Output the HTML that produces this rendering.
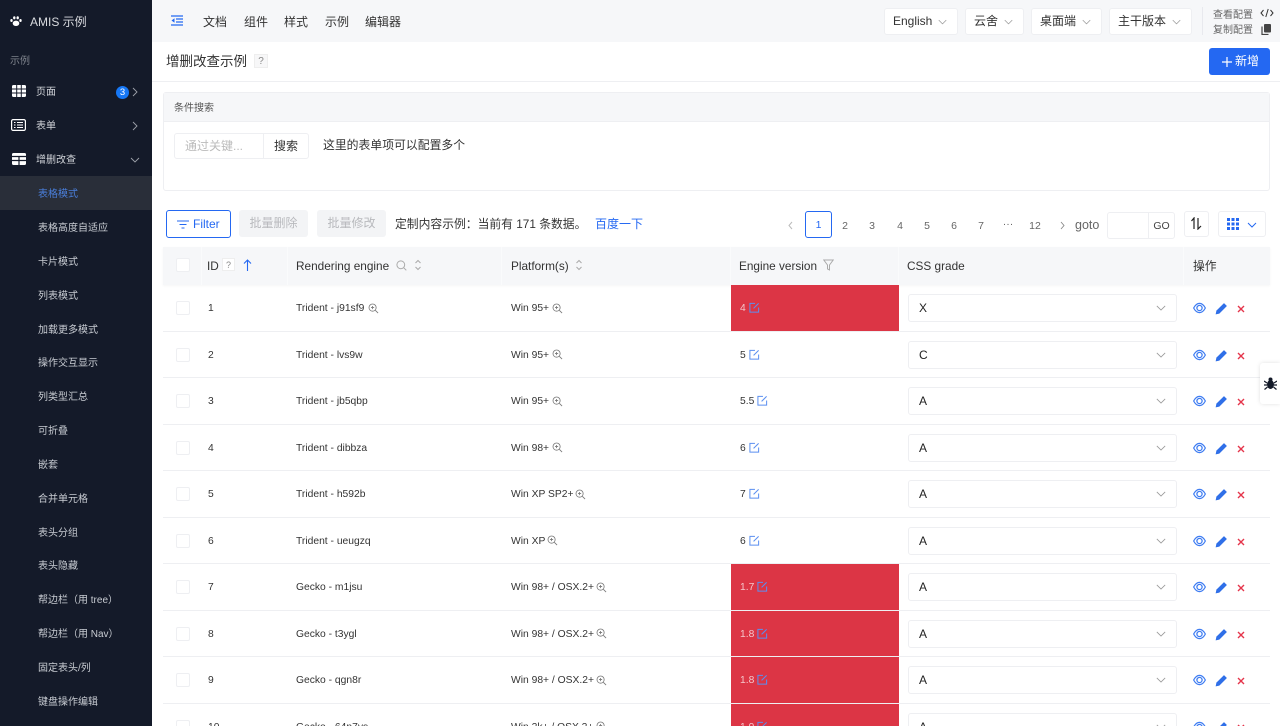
<!DOCTYPE html>
<html><head><meta charset="utf-8"><style>
*{box-sizing:border-box}
html,body{margin:0;padding:0;width:1280px;height:726px;overflow:hidden;background:#fff;font-family:"Liberation Sans","Noto Sans CJK SC",sans-serif;color:#222}
#root{position:absolute;left:0;top:0;width:1280px;height:726px;overflow:hidden;background:#fff}
.a{position:absolute;white-space:nowrap}
#side{position:absolute;left:0;top:0;width:152px;height:726px;background:#141a29;overflow:hidden}
.m{position:absolute;left:38px;margin-top:1px;font-size:10px;line-height:14px;color:#c8ccd2;white-space:nowrap}
.h{position:absolute;left:36px;margin-top:1px;font-size:10px;line-height:14px;color:#d0d3d8}
.nav{position:absolute;top:14px;font-size:12px;line-height:16px;color:#333}
.sel{position:absolute;top:8px;height:27px;background:#fff;border:1px solid #eeeff2;border-radius:3px;font-size:12px;line-height:25px;padding-left:8px;color:#333}
.sel svg{position:absolute;top:10px;right:10px}
.bd{position:absolute;border:1px solid #eeeff2;border-radius:3px;background:#fff}
.pg{position:absolute;top:219px;font-size:10.5px;line-height:14px;color:#666;width:24px;text-align:center}
.th{position:absolute;top:247px;height:38px;background:#f6f7f9;font-size:11.8px;line-height:38px;color:#333}
.row{position:absolute;left:163px;width:1107px;height:46.5px;border-bottom:1px solid #eeeff2}
.row>span{position:absolute;top:1px;font-size:10.3px;line-height:46px;color:#333;white-space:nowrap}
.row svg{position:absolute}
.cb{position:absolute;left:13px;top:16px;width:14px;height:14px;border:1px solid #eeeff2;border-radius:2px;background:#fff}
.red{position:absolute;left:568px;top:0;width:168px;height:45.5px;background:#dc3545}
.s2{position:absolute;left:745px;top:9px;width:269px;height:28px;border:1px solid #eeeff2;border-radius:3px;background:#fff;font-size:12px;line-height:26px;padding-left:10px;color:#222}
</style></head><body>
<svg width="0" height="0" style="position:absolute"><defs>
<symbol id="mg" viewBox="0 0 12 12"><circle cx="5" cy="5" r="3.9" fill="none" stroke="#777" stroke-width=".9"/><path d="M8 8l3 3M3.3 5h3.4M5 3.3v3.4" stroke="#777" stroke-width=".9" fill="none"/></symbol>
<symbol id="ed" viewBox="0 0 12 12"><path d="M6.5 1.5H1v9.5h9.5V6" fill="none" stroke="#5b8ff0" stroke-width="1.1"/><path d="M5 7l5.5-5.5" stroke="#5b8ff0" stroke-width="1.1"/></symbol>
<symbol id="eye" viewBox="0 0 14 12"><path d="M.7 6C2.500 2.600 4.600 1 7 1S11.500 2.600 13.300 6C11.500 9.400 9.400 11 7 11S2.500 9.400.7 6z" fill="none" stroke="#3f7df2" stroke-width="1.300"/><circle cx="7" cy="6" r="2.800" fill="none" stroke="#3f7df2" stroke-width="1.400"/></symbol>
<symbol id="pen" viewBox="0 0 12 12"><path d="M.6 11.400l.7-3.400L8.300 1l2.700 2.700L4 10.700z" fill="#2f6fe8"/></symbol>
<symbol id="x" viewBox="0 0 8 8"><path d="M1 1l6 6M7 1L1 7" stroke="#e5354b" stroke-width="1.400"/></symbol>
<symbol id="dn" viewBox="0 0 12 7"><path d="M1 1l5 5 5-5" fill="none" stroke="#999" stroke-width="1"/></symbol>
<symbol id="sort" viewBox="0 0 8 12"><path d="M1.500 4L4 1.500 6.500 4M1.500 8L4 10.500 6.500 8" fill="none" stroke="#aaa" stroke-width="1"/></symbol>
</defs></svg>
<div id="root">
<div id="side">
<svg class="a" style="left:10px;top:15px" width="12" height="12" viewBox="0 0 12 12"><g fill="#fff"><ellipse cx="6" cy="8.300" rx="3.300" ry="2.700"/><ellipse cx="1.500" cy="5.500" rx="1.200" ry="1.500"/><ellipse cx="4.300" cy="2.800" rx="1.200" ry="1.600"/><ellipse cx="7.700" cy="2.800" rx="1.200" ry="1.600"/><ellipse cx="10.500" cy="5.500" rx="1.200" ry="1.500"/></g></svg>
<div class="a" style="left:30px;top:14px;font-size:12px;line-height:16px;color:#d8dade">AMIS 示例</div>
<div class="a" style="left:10px;top:55px;font-size:10px;line-height:14px;color:#7e838c">示例</div>

<svg class="a" style="left:12px;top:85px" width="14" height="12" viewBox="0 0 14 12"><rect width="14" height="12" rx="1.500" fill="#fff"/><path d="M0 4h14M0 8h14M4.700 0v12M9.300 0v12" stroke="#141a29" stroke-width="1"/></svg>
<div class="h" style="top:85px">页面</div>
<div class="a" style="left:116px;top:86px;width:13px;height:13px;border-radius:50%;background:#1677f5;color:#fff;font-size:9.500px;line-height:13px;text-align:center">3</div>
<svg class="a" style="left:132px;top:87px" width="6" height="10" viewBox="0 0 6 10"><path d="M1 1l4 4-4 4" fill="none" stroke="#9da1a9" stroke-width=".9"/></svg>

<svg class="a" style="left:11px;top:119px" width="15" height="12" viewBox="0 0 15 12"><rect x=".6" y=".6" width="13.800" height="10.800" rx="1.500" fill="none" stroke="#fff" stroke-width="1.200"/><path d="M3 3.500h1.500M6 3.500h6M3 6h1.500M6 6h6M3 8.500h1.500M6 8.500h6" stroke="#fff" stroke-width="1.100"/></svg>
<div class="h" style="top:119px">表单</div>
<svg class="a" style="left:132px;top:121px" width="6" height="10" viewBox="0 0 6 10"><path d="M1 1l4 4-4 4" fill="none" stroke="#9da1a9" stroke-width=".9"/></svg>

<svg class="a" style="left:12px;top:153px" width="14" height="12" viewBox="0 0 14 12"><rect width="14" height="12" rx="1.500" fill="#fff"/><path d="M0 3.500h14M0 7.500h14M7 3.500v8.500" stroke="#141a29" stroke-width="1.200"/></svg>
<div class="h" style="top:153px">增删改查</div>
<svg class="a" style="left:130px;top:157px" width="10" height="6" viewBox="0 0 10 6"><path d="M1 1l4 4 4-4" fill="none" stroke="#9da1a9" stroke-width=".9"/></svg>

<div class="a" style="left:0;top:176px;width:152px;height:34px;background:#292e39"></div>
<div class="m" style="top:187px;color:#4a7fdc">表格模式</div>
<div class="m" style="top:221px">表格高度自适应</div>
<div class="m" style="top:255px">卡片模式</div>
<div class="m" style="top:289px">列表模式</div>
<div class="m" style="top:323px">加载更多模式</div>
<div class="m" style="top:356px">操作交互显示</div>
<div class="m" style="top:390px">列类型汇总</div>
<div class="m" style="top:424px">可折叠</div>
<div class="m" style="top:458px">嵌套</div>
<div class="m" style="top:492px">合并单元格</div>
<div class="m" style="top:526px">表头分组</div>
<div class="m" style="top:559px">表头隐藏</div>
<div class="m" style="top:593px">帮边栏（用 tree）</div>
<div class="m" style="top:627px">帮边栏（用 Nav）</div>
<div class="m" style="top:661px">固定表头/列</div>
<div class="m" style="top:695px">键盘操作编辑</div>
</div>

<!-- top bar -->
<div class="a" style="left:152px;top:0;width:1128px;height:42px;background:#f6f7f9"></div>
<svg class="a" style="left:171px;top:15px" width="12" height="11" viewBox="0 0 12 11"><path d="M0 1h12M5 4h7M5 7h7M0 10h12" stroke="#2468f2" stroke-width="1.200"/><path d="M3.500 3.200L.5 5.500l3 2.300z" fill="#2468f2"/></svg>
<div class="nav" style="left:203px">文档</div>
<div class="nav" style="left:244px">组件</div>
<div class="nav" style="left:284px">样式</div>
<div class="nav" style="left:325px">示例</div>
<div class="nav" style="left:365px">编辑器</div>
<div class="sel" style="left:884px;width:74px">English<svg width="9" height="6"><use href="#dn"/></svg></div>
<div class="sel" style="left:965px;width:59px">云舍<svg width="9" height="6"><use href="#dn"/></svg></div>
<div class="sel" style="left:1031px;width:71px">桌面端<svg width="9" height="6"><use href="#dn"/></svg></div>
<div class="sel" style="left:1109px;width:83px">主干版本<svg width="9" height="6"><use href="#dn"/></svg></div>
<div class="a" style="left:1202px;top:7px;width:1px;height:28px;background:#e8e9ee"></div>
<div class="a" style="left:1213px;top:9px;font-size:10px;line-height:14px;color:#666">查看配置</div>
<div class="a" style="left:1213px;top:24px;font-size:10px;line-height:14px;color:#666">复制配置</div>
<svg class="a" style="left:1260px;top:8px" width="14" height="10" viewBox="0 0 14 10"><path d="M3.500 2L1 5l2.500 3M10.500 2L13 5l-2.500 3M8.200 1L5.800 9" fill="none" stroke="#333" stroke-width="1"/></svg>
<svg class="a" style="left:1261px;top:24px" width="10" height="11" viewBox="0 0 10 11"><rect x="3" y="0" width="7" height="8.500" rx="1" fill="#444"/><path d="M1 2.500v8h6.500" fill="none" stroke="#444" stroke-width="1.200"/></svg>

<!-- title -->
<div class="a" style="left:166px;top:53px;font-size:13.500px;line-height:18px;color:#333">增删改查示例</div>
<div class="a" style="left:254px;top:54px;width:14px;height:14px;background:#f7f7f8;border:1px solid #eee;color:#888;font-size:10px;line-height:13px;text-align:center">?</div>
<div class="a" style="left:1209px;top:48px;width:61px;height:27px;background:#2468f2;border-radius:3px;color:#fff;font-size:12px;line-height:27px;padding-left:26px">新增</div>
<svg class="a" style="left:1222px;top:57px" width="10" height="10" viewBox="0 0 10 10"><path d="M5 0v10M0 5h10" stroke="#fff" stroke-width="1.200"/></svg>
<div class="a" style="left:152px;top:81px;width:1128px;height:1px;background:#eeeff2"></div>

<!-- filter panel -->
<div class="bd" style="left:163px;top:92px;width:1107px;height:99px;border-radius:3px"></div>
<div class="a" style="left:164px;top:93px;width:1105px;height:29px;background:#f6f7f9;border-bottom:1px solid #eeeff2;font-size:10px;line-height:29px;padding-left:10px;color:#555"><span style="position:relative;top:1px">条件搜索</span></div>
<div class="bd" style="left:174px;top:133px;width:90px;height:26px;border-radius:3px 0 0 3px;font-size:12px;line-height:24px;padding-left:10px;color:#bbb">通过关键...</div>
<div class="bd" style="left:263px;top:133px;width:46px;height:26px;border-radius:0 3px 3px 0;font-size:12px;line-height:25px;text-align:center;color:#333">搜索</div>
<div class="a" style="left:323px;top:137px;font-size:11.850px;line-height:16px;color:#333">这里的表单项可以配置多个</div>

<!-- toolbar -->
<div class="a" style="left:166px;top:210px;width:65px;height:28px;border:1px solid #2468f2;border-radius:3px;color:#2468f2;font-size:12px;line-height:26px;padding-left:26px;background:#fff">Filter</div>
<svg class="a" style="left:177px;top:220px" width="12" height="9" viewBox="0 0 12 9"><path d="M0 1h12M2.500 4.500h7M4.500 8h3" stroke="#2468f2" stroke-width="1.100"/></svg>
<div class="a" style="left:239px;top:210px;width:69px;height:27px;background:#f3f4f6;border-radius:3px;color:#b8b9bd;font-size:12px;line-height:27px;text-align:center">批量删除</div>
<div class="a" style="left:317px;top:210px;width:69px;height:27px;background:#f3f4f6;border-radius:3px;color:#b8b9bd;font-size:12px;line-height:27px;text-align:center">批量修改</div>
<div class="a" style="left:395px;top:216px;font-size:11.800px;line-height:16px;color:#333">定制内容示例：当前有 171 条数据。</div>
<div class="a" style="left:595px;top:216px;font-size:12px;line-height:16px;color:#2468f2">百度一下</div>

<!-- pagination -->
<svg class="a" style="left:788px;top:221px" width="5" height="9" viewBox="0 0 5 9"><path d="M4 1L1 4.500 4 8" fill="none" stroke="#bbb"/></svg>
<div class="a" style="left:805px;top:211px;width:27px;height:27px;border:1px solid #2468f2;border-radius:3px;text-align:center;color:#2468f2;font-size:10.500px;line-height:27px">1</div>
<div class="pg" style="left:833px">2</div><div class="pg" style="left:860px">3</div><div class="pg" style="left:888px">4</div><div class="pg" style="left:915px">5</div><div class="pg" style="left:942px">6</div><div class="pg" style="left:969px">7</div><div class="pg" style="left:996px;top:217px">···</div><div class="pg" style="left:1023px">12</div>
<svg class="a" style="left:1060px;top:221px" width="5" height="9" viewBox="0 0 5 9"><path d="M1 1l3 3.500L1 8" fill="none" stroke="#888" stroke-width=".9"/></svg>
<div class="a" style="left:1075px;top:217px;font-size:12.500px;line-height:16px;color:#666">goto</div>
<div class="bd" style="left:1107px;top:212px;width:42px;height:27px;border-radius:3px 0 0 3px"></div>
<div class="bd" style="left:1148px;top:212px;width:27px;height:27px;border-radius:0 3px 3px 0;font-size:10.500px;line-height:27px;text-align:center;color:#444">GO</div>
<div class="bd" style="left:1184px;top:211px;width:25px;height:26px"></div>
<svg class="a" style="left:1190px;top:217px" width="13" height="13" viewBox="0 0 13 13"><path d="M4 12V1L1.500 4M8 1v11l3-3" fill="none" stroke="#222" stroke-width="1.200"/></svg>
<div class="bd" style="left:1218px;top:211px;width:48px;height:26px"></div>
<svg class="a" style="left:1227px;top:218px" width="12" height="12" viewBox="0 0 12 12"><path fill="#2468f2" d="M0 0h3v3H0zM4.500 0h3v3h-3zM9 0h3v3H9zM0 4.500h3v3H0zM4.500 4.500h3v3h-3zM9 4.500h3v3H9zM0 9h3v3H0zM4.500 9h3v3h-3zM9 9h3v3H9z"/></svg>
<svg class="a" style="left:1247px;top:222px" width="10" height="6" viewBox="0 0 10 6"><path d="M1 1l4 4 4-4" fill="none" stroke="#2468f2"/></svg>

<!-- table header -->
<div class="a" style="left:163px;top:247px;width:1107px;height:38px;background:#fafbfc;box-shadow:0 1px 2px rgba(0,0,0,.04)"></div>
<div class="th" style="left:163px;width:38px"></div>
<div class="a" style="left:176px;top:258px;width:14px;height:14px;border:1px solid #eeeff2;border-radius:2px;background:#fff"></div>
<div class="th" style="left:202px;width:85px;padding-left:5px">ID</div>
<div class="a" style="left:222px;top:258px;width:13px;height:13px;background:#fff;border:1px solid #eee;color:#888;font-size:9px;line-height:12px;text-align:center">?</div>
<svg class="a" style="left:243px;top:259px" width="9" height="12" viewBox="0 0 9 12"><path d="M4.500 12V1M1 4.500l3.500-3.500L8 4.500" fill="none" stroke="#2468f2" stroke-width="1.100"/></svg>
<div class="th" style="left:288px;width:213px;padding-left:8px">Rendering engine</div>
<svg class="a" style="left:396px;top:260px" width="11" height="11" viewBox="0 0 11 11"><circle cx="4.800" cy="4.800" r="3.900" fill="none" stroke="#aaa"/><path d="M7.800 7.800l2.500 2.500" stroke="#aaa"/></svg>
<svg class="a" style="left:414px;top:259px" width="8" height="12"><use href="#sort"/></svg>
<div class="th" style="left:502px;width:228px;padding-left:9px">Platform(s)</div>
<svg class="a" style="left:575px;top:259px" width="8" height="12"><use href="#sort"/></svg>
<div class="th" style="left:731px;width:167px;padding-left:8px">Engine version</div>
<svg class="a" style="left:823px;top:259px" width="11" height="12" viewBox="0 0 11 12"><path d="M.8 1h9.400L6.500 6v5l-2-1V6z" fill="none" stroke="#aaa"/></svg>
<div class="th" style="left:899px;width:284px;padding-left:8px">CSS grade</div>
<div class="th" style="left:1184px;width:86px;padding-left:9px">操作</div>

<!-- rows -->
<div class="row" style="top:285px"><i class="cb"></i><span style="left:45px">1</span><span style="left:133px">Trident - j91sf9</span><svg style="left:205px;top:17.500px" width="11" height="11"><use href="#mg"/></svg><span style="left:348px">Win 95+</span><svg style="left:389px;top:17.500px" width="11" height="11"><use href="#mg"/></svg><i class="red"></i><span style="left:577px;color:#f5c6cb">4</span><svg style="left:586px;top:17px" width="11" height="11"><use href="#ed"/></svg><div class="s2">X<svg style="right:10px;top:10px" width="10" height="6"><use href="#dn"/></svg></div><svg style="left:1030px;top:17px" width="13" height="12"><use href="#eye"/></svg><svg style="left:1052px;top:17px" width="13" height="13"><use href="#pen"/></svg><svg style="left:1074px;top:20px" width="8" height="8"><use href="#x"/></svg></div>

<div class="row" style="top:331.500px"><i class="cb"></i><span style="left:45px">2</span><span style="left:133px">Trident - lvs9w</span><span style="left:348px">Win 95+</span><svg style="left:389px;top:17.500px" width="11" height="11"><use href="#mg"/></svg><span style="left:577px">5</span><svg style="left:586px;top:17px" width="11" height="11"><use href="#ed"/></svg><div class="s2">C<svg style="right:10px;top:10px" width="10" height="6"><use href="#dn"/></svg></div><svg style="left:1030px;top:17px" width="13" height="12"><use href="#eye"/></svg><svg style="left:1052px;top:17px" width="13" height="13"><use href="#pen"/></svg><svg style="left:1074px;top:20px" width="8" height="8"><use href="#x"/></svg></div>

<div class="row" style="top:378px"><i class="cb"></i><span style="left:45px">3</span><span style="left:133px">Trident - jb5qbp</span><span style="left:348px">Win 95+</span><svg style="left:389px;top:17.500px" width="11" height="11"><use href="#mg"/></svg><span style="left:577px">5.5</span><svg style="left:594px;top:17px" width="11" height="11"><use href="#ed"/></svg><div class="s2">A<svg style="right:10px;top:10px" width="10" height="6"><use href="#dn"/></svg></div><svg style="left:1030px;top:17px" width="13" height="12"><use href="#eye"/></svg><svg style="left:1052px;top:17px" width="13" height="13"><use href="#pen"/></svg><svg style="left:1074px;top:20px" width="8" height="8"><use href="#x"/></svg></div>

<div class="row" style="top:424.500px"><i class="cb"></i><span style="left:45px">4</span><span style="left:133px">Trident - dibbza</span><span style="left:348px">Win 98+</span><svg style="left:389px;top:17.500px" width="11" height="11"><use href="#mg"/></svg><span style="left:577px">6</span><svg style="left:586px;top:17px" width="11" height="11"><use href="#ed"/></svg><div class="s2">A<svg style="right:10px;top:10px" width="10" height="6"><use href="#dn"/></svg></div><svg style="left:1030px;top:17px" width="13" height="12"><use href="#eye"/></svg><svg style="left:1052px;top:17px" width="13" height="13"><use href="#pen"/></svg><svg style="left:1074px;top:20px" width="8" height="8"><use href="#x"/></svg></div>

<div class="row" style="top:471px"><i class="cb"></i><span style="left:45px">5</span><span style="left:133px">Trident - h592b</span><span style="left:348px">Win XP SP2+</span><svg style="left:412px;top:17.500px" width="11" height="11"><use href="#mg"/></svg><span style="left:577px">7</span><svg style="left:586px;top:17px" width="11" height="11"><use href="#ed"/></svg><div class="s2">A<svg style="right:10px;top:10px" width="10" height="6"><use href="#dn"/></svg></div><svg style="left:1030px;top:17px" width="13" height="12"><use href="#eye"/></svg><svg style="left:1052px;top:17px" width="13" height="13"><use href="#pen"/></svg><svg style="left:1074px;top:20px" width="8" height="8"><use href="#x"/></svg></div>

<div class="row" style="top:517.500px"><i class="cb"></i><span style="left:45px">6</span><span style="left:133px">Trident - ueugzq</span><span style="left:348px">Win XP</span><svg style="left:384px;top:17.500px" width="11" height="11"><use href="#mg"/></svg><span style="left:577px">6</span><svg style="left:586px;top:17px" width="11" height="11"><use href="#ed"/></svg><div class="s2">A<svg style="right:10px;top:10px" width="10" height="6"><use href="#dn"/></svg></div><svg style="left:1030px;top:17px" width="13" height="12"><use href="#eye"/></svg><svg style="left:1052px;top:17px" width="13" height="13"><use href="#pen"/></svg><svg style="left:1074px;top:20px" width="8" height="8"><use href="#x"/></svg></div>

<div class="row" style="top:564px"><i class="cb"></i><span style="left:45px">7</span><span style="left:133px">Gecko - m1jsu</span><span style="left:348px">Win 98+ / OSX.2+</span><svg style="left:433px;top:17.500px" width="11" height="11"><use href="#mg"/></svg><i class="red"></i><span style="left:577px;color:#f5c6cb">1.7</span><svg style="left:594px;top:17px" width="11" height="11"><use href="#ed"/></svg><div class="s2">A<svg style="right:10px;top:10px" width="10" height="6"><use href="#dn"/></svg></div><svg style="left:1030px;top:17px" width="13" height="12"><use href="#eye"/></svg><svg style="left:1052px;top:17px" width="13" height="13"><use href="#pen"/></svg><svg style="left:1074px;top:20px" width="8" height="8"><use href="#x"/></svg></div>

<div class="row" style="top:610.500px"><i class="cb"></i><span style="left:45px">8</span><span style="left:133px">Gecko - t3ygl</span><span style="left:348px">Win 98+ / OSX.2+</span><svg style="left:433px;top:17.500px" width="11" height="11"><use href="#mg"/></svg><i class="red"></i><span style="left:577px;color:#f5c6cb">1.8</span><svg style="left:594px;top:17px" width="11" height="11"><use href="#ed"/></svg><div class="s2">A<svg style="right:10px;top:10px" width="10" height="6"><use href="#dn"/></svg></div><svg style="left:1030px;top:17px" width="13" height="12"><use href="#eye"/></svg><svg style="left:1052px;top:17px" width="13" height="13"><use href="#pen"/></svg><svg style="left:1074px;top:20px" width="8" height="8"><use href="#x"/></svg></div>

<div class="row" style="top:657px"><i class="cb"></i><span style="left:45px">9</span><span style="left:133px">Gecko - qgn8r</span><span style="left:348px">Win 98+ / OSX.2+</span><svg style="left:433px;top:17.500px" width="11" height="11"><use href="#mg"/></svg><i class="red"></i><span style="left:577px;color:#f5c6cb">1.8</span><svg style="left:594px;top:17px" width="11" height="11"><use href="#ed"/></svg><div class="s2">A<svg style="right:10px;top:10px" width="10" height="6"><use href="#dn"/></svg></div><svg style="left:1030px;top:17px" width="13" height="12"><use href="#eye"/></svg><svg style="left:1052px;top:17px" width="13" height="13"><use href="#pen"/></svg><svg style="left:1074px;top:20px" width="8" height="8"><use href="#x"/></svg></div>

<div class="row" style="top:703.500px"><i class="cb"></i><span style="left:45px">10</span><span style="left:133px">Gecko - 64n7ys</span><span style="left:348px">Win 2k+ / OSX.2+</span><svg style="left:433px;top:17.500px" width="11" height="11"><use href="#mg"/></svg><i class="red"></i><span style="left:577px;color:#f5c6cb">1.9</span><svg style="left:594px;top:17px" width="11" height="11"><use href="#ed"/></svg><div class="s2">A<svg style="right:10px;top:10px" width="10" height="6"><use href="#dn"/></svg></div><svg style="left:1030px;top:17px" width="13" height="12"><use href="#eye"/></svg><svg style="left:1052px;top:17px" width="13" height="13"><use href="#pen"/></svg><svg style="left:1074px;top:20px" width="8" height="8"><use href="#x"/></svg></div>

<!-- bug float -->
<div class="a" style="left:1260px;top:363px;width:20px;height:41px;background:#fff;border-radius:3px 0 0 3px;box-shadow:0 0 4px rgba(0,0,0,.12)"></div>
<svg class="a" style="left:1264px;top:377px" width="13" height="13" viewBox="0 0 13 13"><ellipse cx="6.500" cy="7.500" rx="3.500" ry="4.500" fill="#141a29"/><circle cx="6.500" cy="2.500" r="2" fill="#141a29"/><path d="M0 4l3 2M13 4l-3 2M0 8h3M13 8h-3M.5 12.500l3-2.500M12.500 12.500l-3-2.500" stroke="#141a29" stroke-width="1.200"/></svg>
</div>
</body></html>
